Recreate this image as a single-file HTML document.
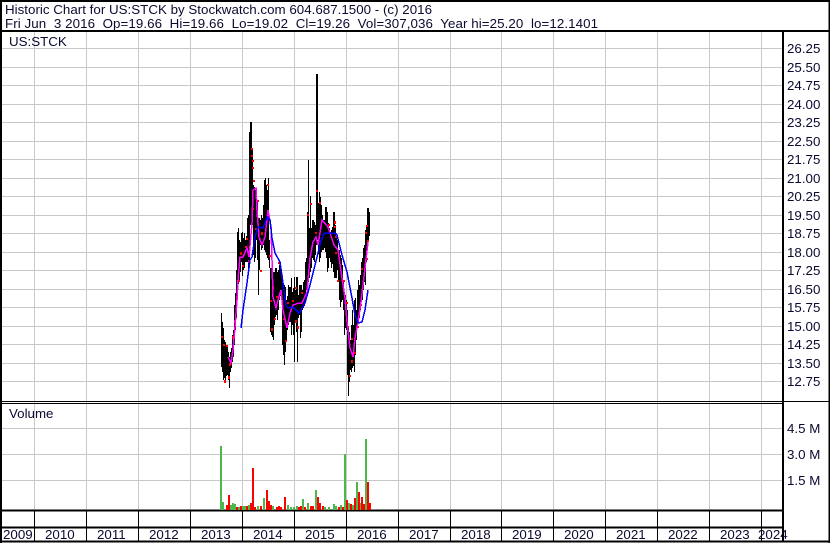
<!DOCTYPE html>
<html><head><meta charset="utf-8"><style>
html,body{margin:0;padding:0;background:#fff}
svg{display:block}
text{font-family:"Liberation Sans",Arial,sans-serif;font-size:13.33px;fill:#0a0a30}
</style></head><body>
<svg width="830" height="543" viewBox="0 0 830 543" xmlns="http://www.w3.org/2000/svg" shape-rendering="crispEdges">
<rect width="830" height="543" fill="#fff"/>
<g stroke="#c8c8c8" stroke-width="1" fill="none">
<path d="M34.5 32V510M86.5 32V510M138.5 32V510M190.5 32V510M242.5 32V510M294.5 32V510M346.5 32V510M398.5 32V510M450.5 32V510M501.5 32V510M553.5 32V510M605.5 32V510M657.5 32V510M709.5 32V510M761.5 32V510"/>
<path d="M2 48.5H782M2 67.5H782M2 85.5H782M2 104.5H782M2 122.5H782M2 141.5H782M2 159.5H782M2 178.5H782M2 196.5H782M2 215.5H782M2 233.5H782M2 252.5H782M2 270.5H782M2 289.5H782M2 307.5H782M2 326.5H782M2 344.5H782M2 363.5H782M2 381.5H782"/>
<path d="M2 428.5H782M2 454.5H782M2 480.5H782"/>
</g>
<g stroke="#000" fill="none">
<path d="M0 1H830M0 31H830" stroke-width="2"/>
<path d="M1 0V543M829.5 0V543" stroke-width="2"/>
<path d="M783 31V542" stroke-width="2"/>
<path d="M0 401.5H830M0 403.5H783" stroke-width="1"/>
<path d="M0 510.5H783M0 527.5H783M0 541.5H830" stroke-width="2"/>
<path d="M34.5 510V541M86.5 510V541M138.5 510V541M190.5 510V541M242.5 510V541M294.5 510V541M346.5 510V541M398.5 510V541M450.5 510V541M501.5 510V541M553.5 510V541M605.5 510V541M657.5 510V541M709.5 510V541M761.5 510V541" stroke-width="1.4"/>
</g>

<!-- price high/low -->
<path fill="none" stroke="#000" stroke-width="1" d="M221.5 313V367M222.5 322V372M223.5 328V380M224.5 340V378M225.5 342V382M226.5 345V376M227.5 347V375M228.5 352V380M229.5 357V388M230.5 352V372M231.5 348V368M232.5 335V362M233.5 330V357M234.5 305V345M235.5 293V330M236.5 270V318M237.5 232V290M238.5 228V284M239.5 240V280M240.5 242V272M241.5 233V262M242.5 232V276M243.5 238V270M244.5 233V268M245.5 240V262M246.5 236V262M247.5 218V262M248.5 215V268M249.5 132V268M250.5 122V225M251.5 122V225M252.5 150V225M253.5 185V255M254.5 187V262M255.5 190V258M256.5 192V240M257.5 200V260M258.5 218V295M259.5 218V270M260.5 220V245M261.5 215V250M262.5 218V248M263.5 205V245M264.5 180V250M265.5 178V252M266.5 185V255M267.5 190V258M268.5 178V260M269.5 240V268M270.5 268V332M271.5 268V335M272.5 270V337M273.5 272V340M274.5 272V325M275.5 268V317M276.5 268V315M277.5 272V320M278.5 270V310M279.5 265V300M280.5 268V296M281.5 272V296M282.5 283V345M283.5 285V355M284.5 285V365M285.5 287V352M286.5 300V340M287.5 296V330M288.5 285V325M289.5 287V322M290.5 287V322M291.5 278V335M292.5 292V325M293.5 288V335M294.5 277V362M295.5 290V322M296.5 277V332M297.5 277V362M298.5 295V318M299.5 285V315M300.5 285V338M301.5 285V332M302.5 290V310M303.5 282V308M304.5 280V306M305.5 262V300M306.5 258V290M307.5 212V285M308.5 160V282M309.5 228V278M310.5 196V272M311.5 228V268M312.5 220V258M313.5 220V260M314.5 222V262M315.5 225V255M316.5 74V245M317.5 74V240M318.5 203V254M319.5 192V262M320.5 197V258M321.5 205V252M322.5 215V250M323.5 220V250M324.5 220V248M325.5 207V252M326.5 207V258M327.5 212V272M328.5 223V268M329.5 228V258M330.5 232V262M331.5 230V268M332.5 227V264M333.5 212V272M334.5 212V278M335.5 225V278M336.5 238V278M337.5 240V270M338.5 250V282M339.5 250V300M340.5 255V307M341.5 258V302M342.5 265V300M343.5 280V310M344.5 292V335M345.5 295V328M346.5 300V330M347.5 310V375M348.5 328V396M349.5 332V382M350.5 340V370M351.5 325V372M352.5 310V368M353.5 325V366M354.5 300V372M355.5 298V355M356.5 310V340M357.5 290V325M358.5 280V320M359.5 285V318M360.5 275V310M361.5 262V300M362.5 258V300M363.5 248V290M364.5 245V282M365.5 230V285M366.5 225V262M367.5 208V250M368.5 208V240M369.5 212V236"/>
<!-- red close ticks -->
<path fill="none" stroke="#f00" stroke-width="2" d="M224 344v2M222 336v2M225 380v3M227 345v2M230 363v3M229 376v3M233 336v3M235 320v3M237 296v3M239 280v2M241 252v3M243 265v2M246 246v2M247 238v2M249 260v3M252 148v2M252 155v2M253 160v2M253 167v2M254 180v2M253 208v2M256 228v2M258 200v2M262 232v3M261 270v2M268 184v2M270 255v2M271 300v2M272 328v3M273 286v3M275 318v2M277 296v2M279 262v2M282 275v2M284 318v2M286 340v2M288 302v2M293 300v2M296 287v2M296 320v3M298 326v3M302 292v2M308 214v2M311 203v2M316 232v2M317 190v2M320 202v2M329 224v2M335 221v3M335 226v2M336 236v2M336 252v2M338 280v2M344 280v2M347 302v2M348 326v2M352 360v3M350 375v2M352 338v2M355 352v2M358 326v2M361 304v2M362 268v2M367 225v2M368 240v2M367 258v2M366 232v2"/>
<!-- magenta MA -->
<polyline fill="none" stroke="#f0f" stroke-width="1.5" points="228,357 231,363 233,350 235,327 237,300 238,280 240,257 243,257 247,248 249,257 252,223 253,190 256,188 257,210 259,237 262,245 265,237 268,210 271,227 272,260 273,297 276,308 278,300 281,290 283,310 287,328 290,313 293,305 299,303 302,303 307,292 310,258 313,242 316,237 318,245 322,220 328,227 334,245 338,250 342,278 345,298 347,322 350,348 353,357 355,338 358,322 361,302 365,268 368,242"/>
<!-- blue MA -->
<polyline fill="none" stroke="#00f" stroke-width="1.5" points="241,328 243,310 247,283 250,260 252,257 255,237 258,227 263,228 267,217 270,220 272,238 275,253 280,262 283,283 286,305 288,308 293,307 299,313 300,312 305,303 310,285 315,265 320,245 323,235 325,233 335,233 337,235 342,255 347,272 352,298 355,315 358,323 362,322 365,310 368,290"/>

<!-- volume -->
<path fill="none" stroke="#4cb84c" stroke-width="2" d="M221 510V446M223 510V502M231 510V505M233 510V503M235 510V504M239 510V507M243 510V506M245 510V506M249 510V505M258 510V506M264 510V498M273 510V506M288 510V505M291 510V507M294 510V507M297 510V506M303 510V499M308 510V503M316 510V490M325 510V507M329 510V507M334 510V504M336 510V506M341 510V505M345 510V454M349 510V503M353 510V505M357 510V482M360 510V503M366 510V439M368 510V495"/>
<path fill="none" stroke="#f00" stroke-width="2" d="M227 510V505M229 510V495M237 510V507M241 510V506M247 510V506M251 510V503M253 510V468M255 510V507M261 510V506M267 510V490M269 510V501M271 510V505M277 510V507M279 510V506M281 510V507M285 510V497M299 510V507M301 510V506M305 510V507M311 510V506M313 510V506M318 510V497M320 510V503M323 510V506M339 510V507M343 510V507M347 510V500M351 510V504M355 510V498M359 510V492M362 510V497M364 510V504M368 510V482M370 510V503"/>

<g>
<text x="5" y="14" textLength="427">Historic Chart for US:STCK by Stockwatch.com 604.687.1500 - (c) 2016</text>
<text x="5" y="28" xml:space="preserve" textLength="593">Fri Jun  3 2016  Op=19.66  Hi=19.66  Lo=19.02  Cl=19.26  Vol=307,036  Year hi=25.20  lo=12.1401</text>
<text x="9" y="46">US:STCK</text>
<text x="9" y="418">Volume</text>
</g>
<g>
<text x="787" y="53">26.25</text><text x="787" y="72">25.50</text><text x="787" y="90">24.75</text><text x="787" y="109">24.00</text><text x="787" y="127">23.25</text><text x="787" y="146">22.50</text><text x="787" y="164">21.75</text><text x="787" y="183">21.00</text><text x="787" y="201">20.25</text><text x="787" y="220">19.50</text><text x="787" y="238">18.75</text><text x="787" y="257">18.00</text><text x="787" y="275">17.25</text><text x="787" y="294">16.50</text><text x="787" y="312">15.75</text><text x="787" y="331">15.00</text><text x="787" y="349">14.25</text><text x="787" y="368">13.50</text><text x="787" y="386">12.75</text>
<text x="787" y="433">4.5 M</text><text x="787" y="459">3.0 M</text><text x="787" y="485">1.5 M</text>
</g>
<g>
<text x="3" y="539">2009</text><text x="45" y="539">2010</text><text x="97" y="539">2011</text><text x="149" y="539">2012</text><text x="201" y="539">2013</text><text x="253" y="539">2014</text><text x="305" y="539">2015</text><text x="357" y="539">2016</text><text x="409" y="539">2017</text><text x="461" y="539">2018</text><text x="512" y="539">2019</text><text x="564" y="539">2020</text><text x="616" y="539">2021</text><text x="668" y="539">2022</text><text x="720" y="539">2023</text><text x="758" y="539">2024</text>
</g>
</svg>
</body></html>
